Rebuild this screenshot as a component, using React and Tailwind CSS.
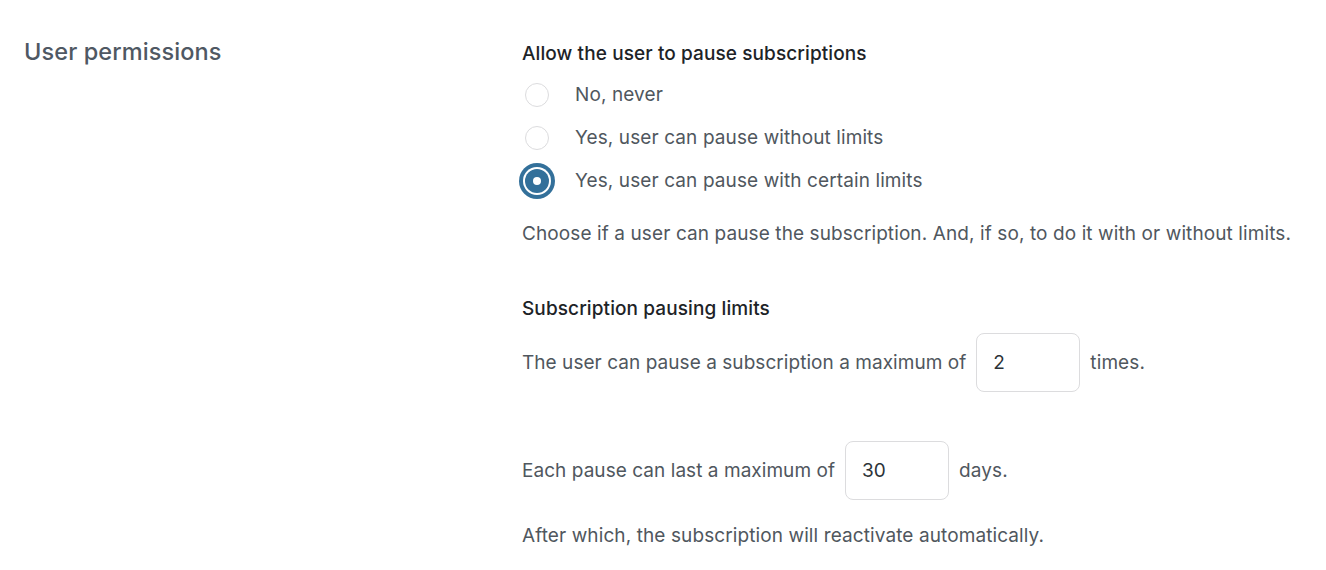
export default function App() {
  const options = [
    { label: "No, never", checked: false },
    { label: "Yes, user can pause without limits", checked: false },
    { label: "Yes, user can pause with certain limits", checked: true },
  ];

  return (
    <div className="min-h-screen bg-white font-['Inter',sans-serif] text-[19px] tracking-[0.1px] text-[#50575e]">
      <div className="flex px-6 pt-[38px]">
        {/* Section title */}
        <div className="w-[498px] shrink-0">
          <h2 className="text-[23.5px] font-medium leading-7 text-[#4f5863]">User permissions</h2>
        </div>

        {/* Settings */}
        <div className="flex-1">
          <div className="mt-[1.5px] h-7 leading-7 font-medium text-[#1d2327]">Allow the user to pause subscriptions</div>

          <div className="mt-[6px]">
            {options.map((o) => (
              <label key={o.label} className="flex h-[43px] items-center">
                {o.checked ? (
                  <span className="ml-[3px] flex h-6 w-6 items-center justify-center rounded-full bg-[#33709a] shadow-[0_0_0_2px_#fff,0_0_0_6px_#33709a]">
                    <span className="h-2 w-2 rounded-full bg-white" />
                  </span>
                ) : (
                  <span className="ml-[3px] h-6 w-6 rounded-full border border-[#dcdcde] bg-white" />
                )}
                <span className="ml-[26px]">{o.label}</span>
              </label>
            ))}
          </div>

          <p className="mt-[17px] leading-7">
            Choose if a user can pause the subscription. And, if so, to do it with or without limits.
          </p>

          <div className="mt-[47px] h-7 leading-7 font-medium text-[#1d2327]">Subscription pausing limits</div>

          <div className="mt-[10px] flex items-center">
            <span className="mt-[3px] tracking-[0.05px]">The user can pause a subscription a maximum of</span>
            <input
              type="text"
              defaultValue="2"
              className="mx-[10px] h-[59px] w-[104px] rounded-lg border border-[#dcdcde] px-4 text-[#2c3338] outline-none"
            />
            <span className="mt-[3px]">times.</span>
          </div>

          <div className="mt-[49px] flex items-center">
            <span className="mt-[3px] tracking-[0.05px]">Each pause can last a maximum of</span>
            <input
              type="text"
              defaultValue="30"
              className="mx-[10px] h-[59px] w-[104px] rounded-lg border border-[#dcdcde] px-4 text-[#2c3338] outline-none"
            />
            <span className="mt-[3px]">days.</span>
          </div>

          <p className="mt-[22px] leading-7">After which, the subscription will reactivate automatically.</p>
        </div>
      </div>
    </div>
  );
}
